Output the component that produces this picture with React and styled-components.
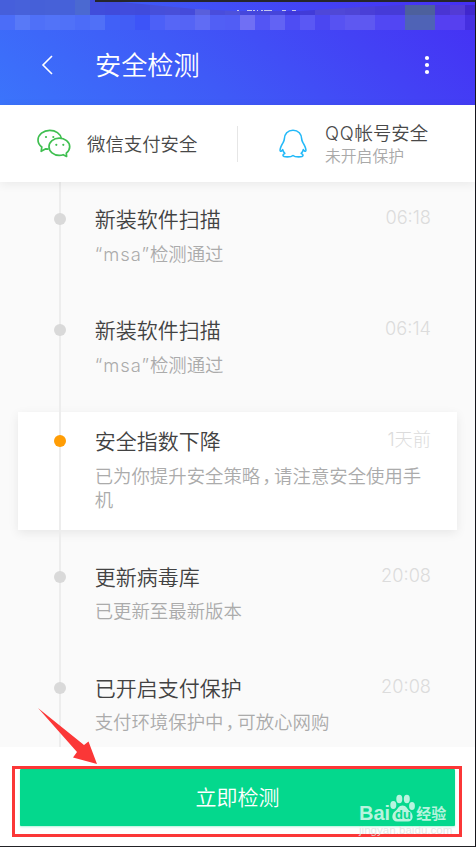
import styled, { createGlobalStyle } from "styled-components";

const GlobalStyle = createGlobalStyle`
  * {
    box-sizing: border-box;
  }

  body {
    margin: 0;
    background: #fff;
    font-family: "Noto Sans CJK SC", sans-serif;
    font-weight: 350;
  }

  h1, h2, p {
    margin: 0;
    font-weight: 350;
  }
`;

const Screen = styled.div`
  position: relative;
  width: 476px;
  height: 847px;
  display: flex;
  flex-direction: column;
  overflow: hidden;
  background: #fff;
  border-right: 1px solid #16161c;
  border-bottom: 1px solid #222226;
`;

const Header = styled.header`
  height: 105px;
  flex: none;
  display: flex;
  flex-direction: column;
  background: linear-gradient(42deg, #3b74fb 0%, #3f5af7 40%, #4342f5 72%, #452ff4 100%);
`;

const StatusBar = styled.div`
  position: relative;
  height: 30px;
`;

const StatusRow = styled.div`
  display: flex;
  height: 15px;
  clip-path: ${(props) => props.$clip || "none"};
`;

const Cell = styled.span`
  flex: none;
  width: 15px;
  background: ${(props) => props.$color};
`;

const TopEdge = styled.div`
  position: absolute;
  top: 0;
  left: 95px;
  right: 0;
  height: 2px;
  background: #25252b;
`;

const Carrier = styled.svg`
  position: absolute;
  top: 10px;
  left: 236px;
`;

const TitleBar = styled.div`
  flex: 1;
  display: flex;
  align-items: center;
  padding: 0 43px 5px 41px;

  h1 {
    flex: 1;
    margin-left: 41px;
    padding-bottom: 2px;
    color: #fff;
    font-size: 26.2px;
    line-height: 40px;
  }
`;

const Shortcuts = styled.section`
  position: relative;
  z-index: 3;
  height: 77px;
  flex: none;
  display: flex;
  align-items: center;
  background: #fff;
  box-shadow: 0 2px 10px rgba(0, 0, 0, 0.07);
`;

const Shortcut = styled.div`
  width: ${(props) => props.$width};
  padding-left: ${(props) => props.$left};
  display: flex;
  align-items: center;
  gap: ${(props) => props.$gap};
`;

const Divider = styled.span`
  width: 1px;
  height: 36px;
  background: #e6e6e6;
`;

const ShortcutName = styled.p`
  padding-bottom: 1px;
  color: #484848;
  font-size: 18.4px;
  line-height: 23px;
`;

const ShortcutNote = styled.p`
  color: #a9a9a9;
  font-size: 15.8px;
  line-height: 22px;
`;

const Timeline = styled.main`
  position: relative;
  height: 565px;
  flex: none;
  display: flex;
  flex-direction: column;
  gap: 17.5px;
  padding: 8px 18px 0;
  overflow: hidden;
  background: #fafafa;

  &::before {
    content: "";
    position: absolute;
    top: 0;
    bottom: 0;
    left: 59px;
    width: 2px;
    background: #ededed;
  }
`;

const Item = styled.article`
  flex: none;
  min-height: 93.5px;
  display: grid;
  grid-template-columns: 76.7px 1fr;
  padding: 14px 26px 18px 0;
  background: ${(props) => (props.$active ? "#fff" : "transparent")};
  box-shadow: ${(props) =>
    props.$active ? "0 3px 10px rgba(0, 0, 0, 0.08)" : "none"};
`;

const Dot = styled.span`
  position: relative;
  width: 12px;
  height: 12px;
  margin: 9px 0 0 36px;
  border-radius: 50%;
  background: ${(props) => (props.$active ? "#ff9d05" : "#d9d9d9")};
`;

const ItemHead = styled.div`
  display: flex;
  justify-content: space-between;
  height: 28px;
  margin-bottom: 8.5px;

  h2 {
    color: #424242;
    font-size: 21px;
    line-height: 28px;
  }

  time {
    color: #dcdcdc;
    font-family: Inter, "Noto Sans CJK SC", sans-serif;
    font-size: 18.2px;
    font-weight: 300;
    line-height: 27px;
  }
`;

const ItemText = styled.p`
  color: #ababab;
  font-size: 18.4px;
  line-height: 24.8px;
  white-space: pre-line;
`;

const Latin = styled.span`
  font-family: Inter, sans-serif;
  font-weight: 300;
  line-height: 1;
  letter-spacing: ${(props) => props.$spacing || "0"};
`;

const Comma = styled.span`
  padding: 0 2.7px 0 2px;
  font-feature-settings: "halt";
`;

const Footer = styled.footer`
  flex: 1;
  padding: 22px 20px 0;
`;

const ScanButton = styled.button`
  display: block;
  width: 435px;
  height: 57px;
  padding: 0 0 4px;
  border: 0;
  border-radius: 1px;
  background: #04d88d;
  color: #fff;
  font: inherit;
  font-size: 21px;
  box-shadow: 0 1px 2px rgba(4, 216, 141, 0.3);
`;

const Frame = styled.div`
  position: absolute;
  left: 12px;
  top: 766px;
  width: 450px;
  height: 71px;
  border: 3px solid #fb3737;
`;

const Arrow = styled.svg`
  position: absolute;
  left: 36px;
  top: 706px;
  z-index: 4;
`;

const Watermark = styled.div`
  position: absolute;
  left: 359px;
  top: 793px;
  width: 92px;
  color: rgba(255, 255, 255, 0.72);
`;

const Brand = styled.div`
  display: flex;
  align-items: flex-end;
  height: 29px;
  font: bold 20px/18px "Liberation Sans", sans-serif;

  svg {
    margin: 0 1px 0 0;
  }

  span {
    font: 700 15px/19px "Noto Sans CJK SC", sans-serif;
  }
`;

const Site = styled.div`
  margin-top: 1px;
  font: 11.6px/13px "Liberation Sans", sans-serif;
  color: rgba(222, 228, 226, 0.85);
`;

const topCells = [
  "#465fdb", "#4761da", "#4660d8", "#4761d8", "#4661d9", "#4b69d1",
  "#404ddb", "#404bdb", "#414cdd", "#404bdc", "#464fda", "#484fd9",
  "#454bda", "#595fdc", "#494ddc", "#4d51da", "#4546db", "#4646d9",
  "#4645da", "#4039d9", "#413bd8", "#4e47d9", "#5048d6", "#4e45d5",
  "#4a3fd7", "#463bd8", "#463bd7", "#4d609d", "#4d609d", "#4a35d3",
  "#533bd5", "#4027cd",
];

const lowCells = [
  "#4b6df8", "#5879f7", "#4f70f8", "#5273f8", "#5071f8", "#4c6cf8",
  "#5070f7", "#4160f7", "#425df6", "#3d54f8", "#4c60f7", "#5666f6",
  "#5564f5", "#606cf4", "#515ff5", "#515df5", "#706ff4", "#5355f4",
  "#6263f4", "#4e4df3", "#5a58f4", "#4b47f1", "#5752f2", "#5e58f1",
  "#5e58f1", "#5148f3", "#5246f3", "#4f63b6", "#4f63b6", "#5540f1",
  "#5740ef", "#452fe0",
];

// the first row of cells follows the torn lower edge of the dark strip
const tornEdge =
  "polygon(0 0, 95px 0, 120px 2px, 195px 9px, 236px 11px, 300px 11px, 330px 9px, 360px 7px, 405px 5px, 476px 5px, 476px 15px, 0 15px)";

const items = [
  { title: "新装软件扫描", time: "06:18", app: "msa", text: "检测通过" },
  { title: "新装软件扫描", time: "06:14", app: "msa", text: "检测通过" },
  {
    title: "安全指数下降",
    time: "1天前",
    text: "已为你提升安全策略，请注意安全使用手\n机",
    active: true,
  },
  { title: "更新病毒库", time: "20:08", text: "已更新至最新版本" },
  { title: "已开启支付保护", time: "20:08", text: "支付环境保护中，可放心网购" },
];

const WechatIcon = () => (
  <svg width="34" height="30" viewBox="0 0 34 30" fill="none">
    <g stroke="#3fbf50" strokeWidth="1.7" strokeLinejoin="round">
      <path d="M11.6 20.2 L8.8 19.8 L4.2 22.3 L4.8 18 C2.3 16.2 1 13.7 1 11 C1 5.6 6.4 1.3 12.8 1.3 C18.6 1.3 23.5 4.7 24.3 9.3" />
      <path d="M22.2 9.2 C16.6 9.2 12 13 12 17.8 C12 22.6 16.6 26.4 22.2 26.4 C23.7 26.4 25 26.2 26.2 25.7 L29.6 27.4 L29.3 24.1 C31.4 22.5 32.7 20.3 32.7 17.8 C32.7 13 27.9 9.2 22.2 9.2 Z" />
    </g>
    <g fill="#3fbf50">
      <circle cx="9" cy="8" r="1.1" />
      <circle cx="16.3" cy="8" r="1.1" />
      <circle cx="19.3" cy="15.8" r="1.1" />
      <circle cx="26.3" cy="15.8" r="1.1" />
    </g>
  </svg>
);

const QQIcon = () => (
  <svg width="28" height="29" viewBox="0 0 28 29" fill="none">
    <path
      d="M14 1.2 C8.7 1.2 5.4 5 5.3 10 C5.3 11.3 4.7 12.3 4.2 13.4 C2.3 16.6 .9 19.2 1.1 21.4 C1.3 23 2.7 22.2 3.7 20.6 C4 22.1 4.7 23.3 5.8 24.4 C4.5 24.9 3.8 25.7 4 26.6 C4.4 28.3 11.9 28.4 14 26.5 C16.1 28.4 23.6 28.3 24 26.6 C24.2 25.7 23.5 24.9 22.2 24.4 C23.3 23.3 24 22.1 24.3 20.6 C25.3 22.2 26.7 23 26.9 21.4 C27.1 19.2 25.7 16.6 23.8 13.4 C23.3 12.3 22.7 11.3 22.7 10 C22.6 5 19.3 1.2 14 1.2 Z"
      stroke="#23b9f8"
      strokeWidth="1.6"
      strokeLinejoin="round"
    />
  </svg>
);

const Description = ({ app, text }) => {
  const [before, after] = text.split("，");

  return (
    <ItemText>
      {app && <Latin $spacing="1px">“{app}”</Latin>}
      {before}
      {after && <Comma>，</Comma>}
      {after}
    </ItemText>
  );
};

const App = () => {
  return (
    <>
      <GlobalStyle />
      <Screen>
        <Header>
          <StatusBar>
            <StatusRow $clip={tornEdge}>
              {topCells.map((color, index) => (
                <Cell key={index} $color={color} />
              ))}
            </StatusRow>
            <StatusRow>
              {lowCells.map((color, index) => (
                <Cell key={index} $color={color} />
              ))}
            </StatusRow>
            <TopEdge />
            <Carrier width="62" height="1" viewBox="0 0 62 1">
              <path
                d="M1 .5h2M11 .5h5M17 .5h2M21 .5h1M25 .5h2M28 .5h8M46 .5h4M56 .5h4"
                stroke="#c3c6ef"
              />
            </Carrier>
          </StatusBar>
          <TitleBar>
            <svg width="13" height="20" viewBox="0 0 13 20" fill="none">
              <path d="M11 1 L2 10 L11 19" stroke="#fff" strokeWidth="1.6" />
            </svg>
            <h1>安全检测</h1>
            <svg width="10" height="20" viewBox="0 0 10 20" fill="#fff">
              <circle cx="5" cy="3" r="2.1" />
              <circle cx="5" cy="10" r="2.1" />
              <circle cx="5" cy="17" r="2.1" />
            </svg>
          </TitleBar>
        </Header>

        <Shortcuts>
          <Shortcut $width="237px" $left="37px" $gap="16px">
            <WechatIcon />
            <ShortcutName>微信支付安全</ShortcutName>
          </Shortcut>
          <Divider />
          <Shortcut $width="237px" $left="41px" $gap="18px">
            <QQIcon />
            <div>
              <ShortcutName>
                <Latin $spacing="0.8px">QQ</Latin>帐号安全
              </ShortcutName>
              <ShortcutNote>未开启保护</ShortcutNote>
            </div>
          </Shortcut>
        </Shortcuts>

        <Timeline>
          {items.map((item, index) => (
            <Item key={index} $active={item.active}>
              <Dot $active={item.active} />
              <div>
                <ItemHead>
                  <h2>{item.title}</h2>
                  <time>{item.time}</time>
                </ItemHead>
                <Description app={item.app} text={item.text} />
              </div>
            </Item>
          ))}
        </Timeline>

        <Footer>
          <ScanButton>立即检测</ScanButton>
        </Footer>

        <Frame />
        <Arrow width="62" height="60" viewBox="0 0 62 60">
          <path
            d="M2 2 L48 39 L52.5 35.5 L61 58 L37 51.5 L41 46 Z"
            fill="#fb3737"
          />
        </Arrow>
        <Watermark>
          <Brand>
            Bai
            <svg width="25" height="28" viewBox="0 0 25 28" fill="currentColor">
              <ellipse cx="3.3" cy="11" rx="3" ry="4" />
              <ellipse cx="9.3" cy="5" rx="3" ry="4.2" />
              <ellipse cx="16.8" cy="5" rx="3" ry="4.2" />
              <ellipse cx="22" cy="12" rx="2.9" ry="4" />
              <path d="M12.5 11.5 C8.5 11.5 8 15 5 17.3 C1 20.5 1.4 27.5 7 27.5 C10 27.5 15 27.5 18 27.5 C23.6 27.5 24 20.5 20 17.3 C17 15 16.5 11.5 12.5 11.5 Z" />
              <text
                x="5"
                y="25"
                fill="#04d88d"
                fontSize="13"
                fontFamily="Liberation Sans, sans-serif"
              >
                du
              </text>
            </svg>
            <span>经验</span>
          </Brand>
          <Site>jingyan.baidu.com</Site>
        </Watermark>
      </Screen>
    </>
  );
};

export default App;
